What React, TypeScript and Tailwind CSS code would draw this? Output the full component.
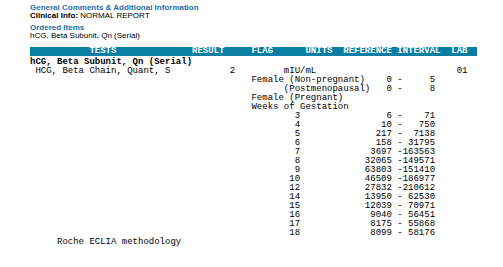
import React from "react"

// build a fixed-width line from [column, text] pieces
const line = (...parts: [number, string][]) => {
  let s = ""
  for (const [col, text] of parts) {
    s = s.padEnd(col, " ") + text
  }
  return s
}

const right = (end: number, text: string): [number, string] => [end - text.length + 1, text]

const HEADER = line(
  [11, "TESTS"],
  [30, "RESULT"],
  [41, "FLAG"],
  [51, "UNITS"],
  [58, "REFERENCE"],
  [68, "INTERVAL"],
  [78, "LAB"],
)

const WEEKS: [string, string, string][] = [
  ["3", "6", "71"],
  ["4", "10", "750"],
  ["5", "217", "7138"],
  ["6", "158", "31795"],
  ["7", "3697", "163563"],
  ["8", "32065", "149571"],
  ["9", "63803", "151410"],
  ["10", "46509", "186977"],
  ["12", "27832", "210612"],
  ["14", "13950", "62530"],
  ["15", "12039", "70971"],
  ["16", "9040", "56451"],
  ["17", "8175", "55868"],
  ["18", "8099", "58176"],
]

const BODY = [
  line([1, "HCG, Beta Chain, Quant, S"], [37, "2"], [47, "mIU/mL"], [79, "01"]),
  line([41, "Female (Non-pregnant)"], right(66, "0"), [68, "-"], right(74, "5")),
  line([47, "(Postmenopausal)"], right(66, "0"), [68, "-"], right(74, "8")),
  line([41, "Female (Pregnant)"]),
  line([41, "Weeks of Gestation"]),
  ...WEEKS.map(([w, lo, hi]) => line(right(49, w), right(66, lo), [68, "-"], right(74, hi))),
  line([5, "Roche ECLIA methodology"]),
]

export default function App() {
  return (
    <div className="w-[503px] h-[267px] bg-white pl-[30px] pt-[4px] overflow-hidden">
      <div className="font-['Liberation_Sans',Arial,sans-serif] text-[8px] leading-[8px]">
        <div className="font-bold text-[#1d6fa9]">General Comments &amp; Additional Information</div>
        <div className="text-black">
          <span className="font-bold">Clinical Info:</span> NORMAL REPORT
        </div>
        <div className="font-bold text-[#1d6fa9] mt-[4px]">Ordered Items</div>
        <div className="text-black">hCG, Beta Subunit, Qn (Serial)</div>
      </div>

      <div className="mt-[7px] w-[447px] h-[9px] bg-[#0a7fa4] text-white font-bold font-['Liberation_Mono','Courier_New',monospace] text-[9px] leading-[9px] whitespace-pre">
        {HEADER}
      </div>

      <div className="font-['Liberation_Mono','Courier_New',monospace] text-[9px] text-black whitespace-pre">
        <div className="font-bold leading-[9px] mt-[2px]">hCG, Beta Subunit, Qn (Serial)</div>
        {BODY.map((l, i) => (
          <div key={i} className="leading-[9px]">
            {l}
          </div>
        ))}
      </div>
    </div>
  )
}
